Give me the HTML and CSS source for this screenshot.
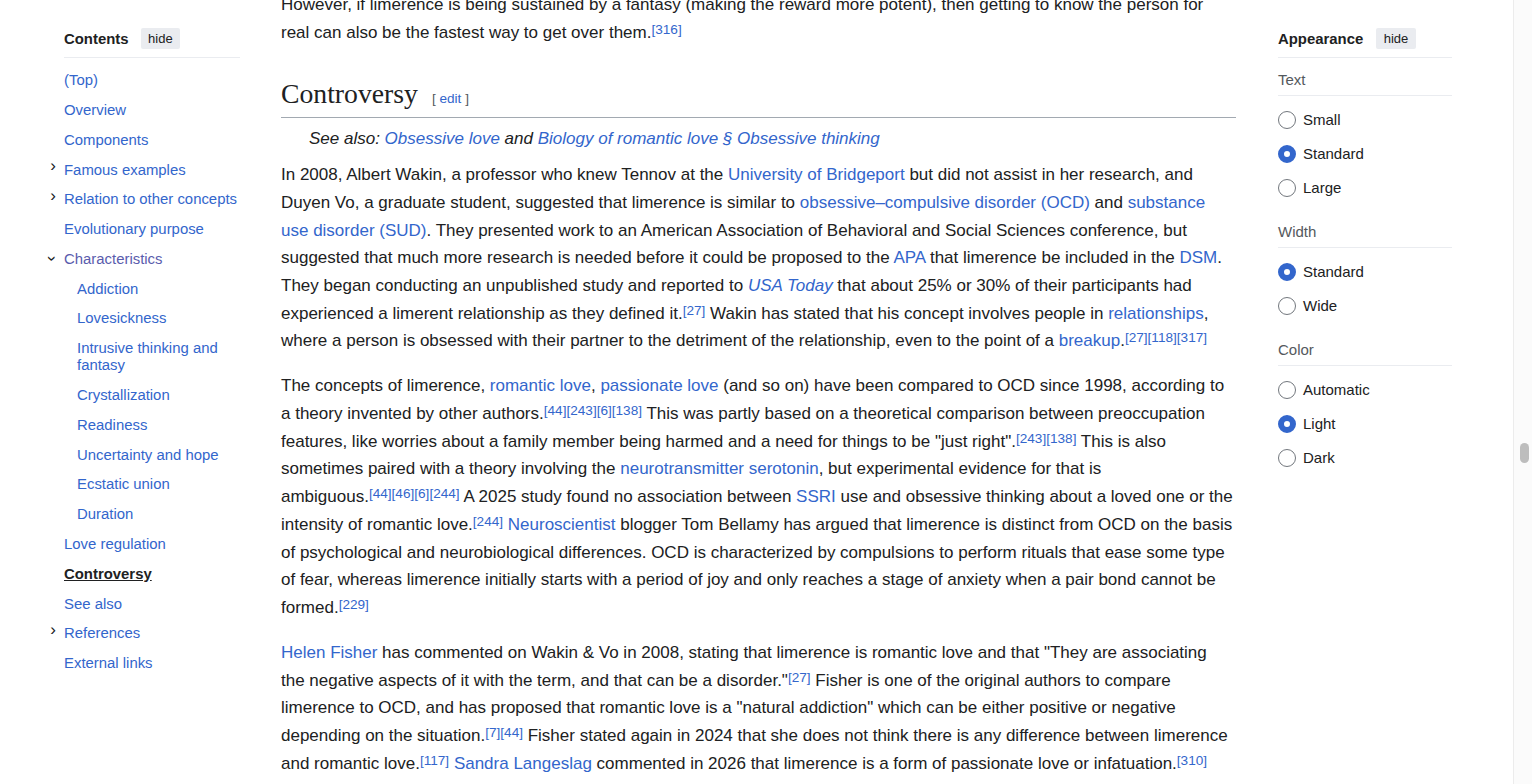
FILE: index.html
```html
<!DOCTYPE html>
<html lang="en">
<head>
<meta charset="utf-8">
<title>Limerence - Controversy</title>
<link rel="stylesheet" href="styles.css">
</head>
<body>
<div class="page">
  <nav class="toc">
    <div class="panel-head">
      <span class="panel-title">Contents</span>
      <span class="hide-btn">hide</span>
    </div>
    <ul class="toc-list">
      <li class="toc-item"><a href="#">(Top)</a></li>
      <li class="toc-item"><a href="#">Overview</a></li>
      <li class="toc-item"><a href="#">Components</a></li>
      <li class="toc-item has-kids"><span class="chev">&#x203A;</span><a href="#">Famous examples</a></li>
      <li class="toc-item has-kids"><span class="chev">&#x203A;</span><a href="#">Relation to other concepts</a></li>
      <li class="toc-item"><a href="#">Evolutionary purpose</a></li>
      <li class="toc-item has-kids"><span class="chev chev-open">&#x203A;</span><a href="#" class="visited">Characteristics</a></li>
      <li class="toc-item sub"><a href="#">Addiction</a></li>
      <li class="toc-item sub"><a href="#">Lovesickness</a></li>
      <li class="toc-item sub"><a href="#">Intrusive thinking and fantasy</a></li>
      <li class="toc-item sub"><a href="#">Crystallization</a></li>
      <li class="toc-item sub"><a href="#">Readiness</a></li>
      <li class="toc-item sub"><a href="#">Uncertainty and hope</a></li>
      <li class="toc-item sub"><a href="#">Ecstatic union</a></li>
      <li class="toc-item sub"><a href="#">Duration</a></li>
      <li class="toc-item"><a href="#">Love regulation</a></li>
      <li class="toc-item active"><a href="#">Controversy</a></li>
      <li class="toc-item"><a href="#">See also</a></li>
      <li class="toc-item has-kids"><span class="chev">&#x203A;</span><a href="#">References</a></li>
      <li class="toc-item"><a href="#">External links</a></li>
    </ul>
  </nav>

  <main class="content">
    <p class="para">However, if limerence is being sustained by a fantasy (making the reward more potent), then getting to know the person for<br>real can also be the fastest way to get over them.<sup class="ref"><a href="#">[316]</a></sup></p>

    <div class="heading">
      <h2 class="h2">Controversy</h2>
      <span class="editsection"><span class="bracket">[</span> <a href="#">edit</a> <span class="bracket">]</span></span>
    </div>

    <div class="hatnote">See also: <a href="#">Obsessive love</a> and <a href="#">Biology of romantic love §&nbsp;Obsessive thinking</a></div>

    <p class="para">In 2008, Albert Wakin, a professor who knew Tennov at the <a href="#">University of Bridgeport</a> but did not assist in her research, and<br>Duyen Vo, a graduate student, suggested that limerence is similar to <a href="#">obsessive–compulsive disorder (OCD)</a> and <a href="#">substance<br>use disorder (SUD)</a>. They presented work to an American Association of Behavioral and Social Sciences conference, but<br>suggested that much more research is needed before it could be proposed to the <a href="#">APA</a> that limerence be included in the <a href="#">DSM</a>.<br>They began conducting an unpublished study and reported to <a href="#"><i>USA Today</i></a> that about 25% or 30% of their participants had<br>experienced a limerent relationship as they defined it.<sup class="ref"><a href="#">[27]</a></sup> Wakin has stated that his concept involves people in <a href="#">relationships</a>,<br>where a person is obsessed with their partner to the detriment of the relationship, even to the point of a <a href="#">breakup</a>.<sup class="ref"><a href="#">[27]</a><a href="#">[118]</a><a href="#">[317]</a></sup></p>

    <p class="para">The concepts of limerence, <a href="#">romantic love</a>, <a href="#">passionate love</a> (and so on) have been compared to OCD since 1998, according to<br>a theory invented by other authors.<sup class="ref"><a href="#">[44]</a><a href="#">[243]</a><a href="#">[6]</a><a href="#">[138]</a></sup> This was partly based on a theoretical comparison between preoccupation<br>features, like worries about a family member being harmed and a need for things to be "just right".<sup class="ref"><a href="#">[243]</a><a href="#">[138]</a></sup> This is also<br>sometimes paired with a theory involving the <a href="#">neurotransmitter serotonin</a>, but experimental evidence for that is<br>ambiguous.<sup class="ref"><a href="#">[44]</a><a href="#">[46]</a><a href="#">[6]</a><a href="#">[244]</a></sup> A 2025 study found no association between <a href="#">SSRI</a> use and obsessive thinking about a loved one or the<br>intensity of romantic love.<sup class="ref"><a href="#">[244]</a></sup> <a href="#">Neuroscientist</a> blogger Tom Bellamy has argued that limerence is distinct from OCD on the basis<br>of psychological and neurobiological differences. OCD is characterized by compulsions to perform rituals that ease some type<br>of fear, whereas limerence initially starts with a period of joy and only reaches a stage of anxiety when a pair bond cannot be<br>formed.<sup class="ref"><a href="#">[229]</a></sup></p>

    <p class="para"><a href="#">Helen Fisher</a> has commented on Wakin &amp; Vo in 2008, stating that limerence is romantic love and that "They are associating<br>the negative aspects of it with the term, and that can be a disorder."<sup class="ref"><a href="#">[27]</a></sup> Fisher is one of the original authors to compare<br>limerence to OCD, and has proposed that romantic love is a "natural addiction" which can be either positive or negative<br>depending on the situation.<sup class="ref"><a href="#">[7]</a><a href="#">[44]</a></sup> Fisher stated again in 2024 that she does not think there is any difference between limerence<br>and romantic love.<sup class="ref"><a href="#">[117]</a></sup> <a href="#">Sandra Langeslag</a> commented in 2026 that limerence is a form of passionate love or infatuation.<sup class="ref"><a href="#">[310]</a></sup></p>
  </main>

  <aside class="appearance">
    <div class="panel-head">
      <span class="panel-title">Appearance</span>
      <span class="hide-btn">hide</span>
    </div>
    <div class="app-group">
      <div class="app-label">Text</div>
      <label class="radio-row"><span class="radio"></span>Small</label>
      <label class="radio-row"><span class="radio checked"></span>Standard</label>
      <label class="radio-row"><span class="radio"></span>Large</label>
    </div>
    <div class="app-group">
      <div class="app-label">Width</div>
      <label class="radio-row"><span class="radio checked"></span>Standard</label>
      <label class="radio-row"><span class="radio"></span>Wide</label>
    </div>
    <div class="app-group">
      <div class="app-label">Color</div>
      <label class="radio-row"><span class="radio"></span>Automatic</label>
      <label class="radio-row"><span class="radio checked"></span>Light</label>
      <label class="radio-row"><span class="radio"></span>Dark</label>
    </div>
  </aside>
</div>
<div class="scrollbar"><div class="scroll-thumb"></div></div>
</body>
</html>
```
FILE: styles.css
```css
html, body {
  margin: 0;
  padding: 0;
  height: 784px;
  overflow: hidden;
  background: #ffffff;
}
body {
  font-family: "Liberation Sans", Arial, sans-serif;
  color: #202122;
}
a {
  color: #3366cc;
  text-decoration: none;
}
.page {
  display: flex;
  align-items: flex-start;
  padding-left: 64px;
}

/* ---------- Left TOC ---------- */
.toc {
  width: 176px;
  flex: none;
  padding-top: 28px;
  font-size: 14.9px;
}
.panel-head {
  display: flex;
  align-items: center;
  gap: 12px;
  height: 21px;
  padding-bottom: 8px;
  border-bottom: 1px solid #eaecf0;
}
.panel-title {
  font-weight: bold;
  font-size: 14.9px;
}
.hide-btn {
  background: #eaecf0;
  border-radius: 2px;
  font-size: 13px;
  line-height: 21px;
  padding: 0 7.5px;
  color: #202122;
}
.toc-list {
  list-style: none;
  margin: 8px 0 0;
  padding: 0;
}
.toc-item {
  position: relative;
  line-height: 17.3px;
  padding: 6.24px 0;
}
.toc-item.sub {
  padding-left: 13px;
}
.toc-item .visited {
  color: #5a5cad;
}
.toc-item.active a {
  color: #202122;
  font-weight: bold;
  text-decoration: underline;
}
.chev {
  position: absolute;
  left: -16px;
  top: 2px;
  font-size: 17px;
  color: #202122;
  width: 10px;
  text-align: center;
}
.chev-open {
  transform: rotate(90deg);
  top: 5px;
  left: -17px;
}

/* ---------- Main content ---------- */
.content {
  width: 955px;
  flex: none;
  margin-left: 41px;
  margin-top: -8.8px;
  font-size: 17px;
  line-height: 27.7px;
}
.para {
  margin: 0 0 17.3px;
  white-space: nowrap;
}
.ref {
  font-size: 80%;
  line-height: 1;
  vertical-align: 0.33em;
}
.heading {
  display: flex;
  align-items: baseline;
  border-bottom: 1px solid #a2a9b1;
  margin-top: 29.2px;
  margin-bottom: 7px;
  padding-bottom: 6px;
}
.h2 {
  margin: 0;
  font-family: "Liberation Serif", "Times New Roman", serif;
  font-weight: normal;
  font-size: 27.7px;
  line-height: 35px;
}
.editsection {
  margin-left: 14px;
  font-size: 13.6px;
  line-height: 1;
}
.bracket {
  color: #54595d;
}
.hatnote {
  font-style: italic;
  padding-left: 28px;
  margin-bottom: 8.6px;
}

/* ---------- Right appearance panel ---------- */
.appearance {
  width: 174px;
  flex: none;
  margin-left: 42px;
  padding-top: 28px;
  font-size: 15px;
}
.appearance .panel-head {
  gap: 13px;
}
.app-group {
  margin-top: 7px;
  padding-bottom: 6px;
}
.app-group + .app-group {
  margin-top: 6px;
}
.app-label {
  color: #54595d;
  line-height: 17.3px;
  padding: 6.25px 0;
  border-bottom: 1px solid #eaecf0;
  margin-bottom: 7px;
}
.radio-row {
  display: flex;
  align-items: center;
  gap: 7px;
  height: 34.1px;
  line-height: 17.3px;
}
.radio {
  box-sizing: border-box;
  width: 18px;
  height: 18px;
  border-radius: 50%;
  border: 1px solid #72777d;
  background: #ffffff;
  flex: none;
}
.radio.checked {
  border: 6px solid #3366cc;
}

/* ---------- Fake scrollbar (overlay) ---------- */
.scrollbar {
  position: fixed;
  top: 0;
  right: 0;
  width: 18px;
  height: 784px;
  background: #fbfbfb;
  border-left: 1px solid #ececec;
}
.scroll-thumb {
  position: absolute;
  left: 6px;
  top: 443px;
  width: 9px;
  height: 20px;
  border-radius: 5px;
  background: #bdbdbd;
}
```
